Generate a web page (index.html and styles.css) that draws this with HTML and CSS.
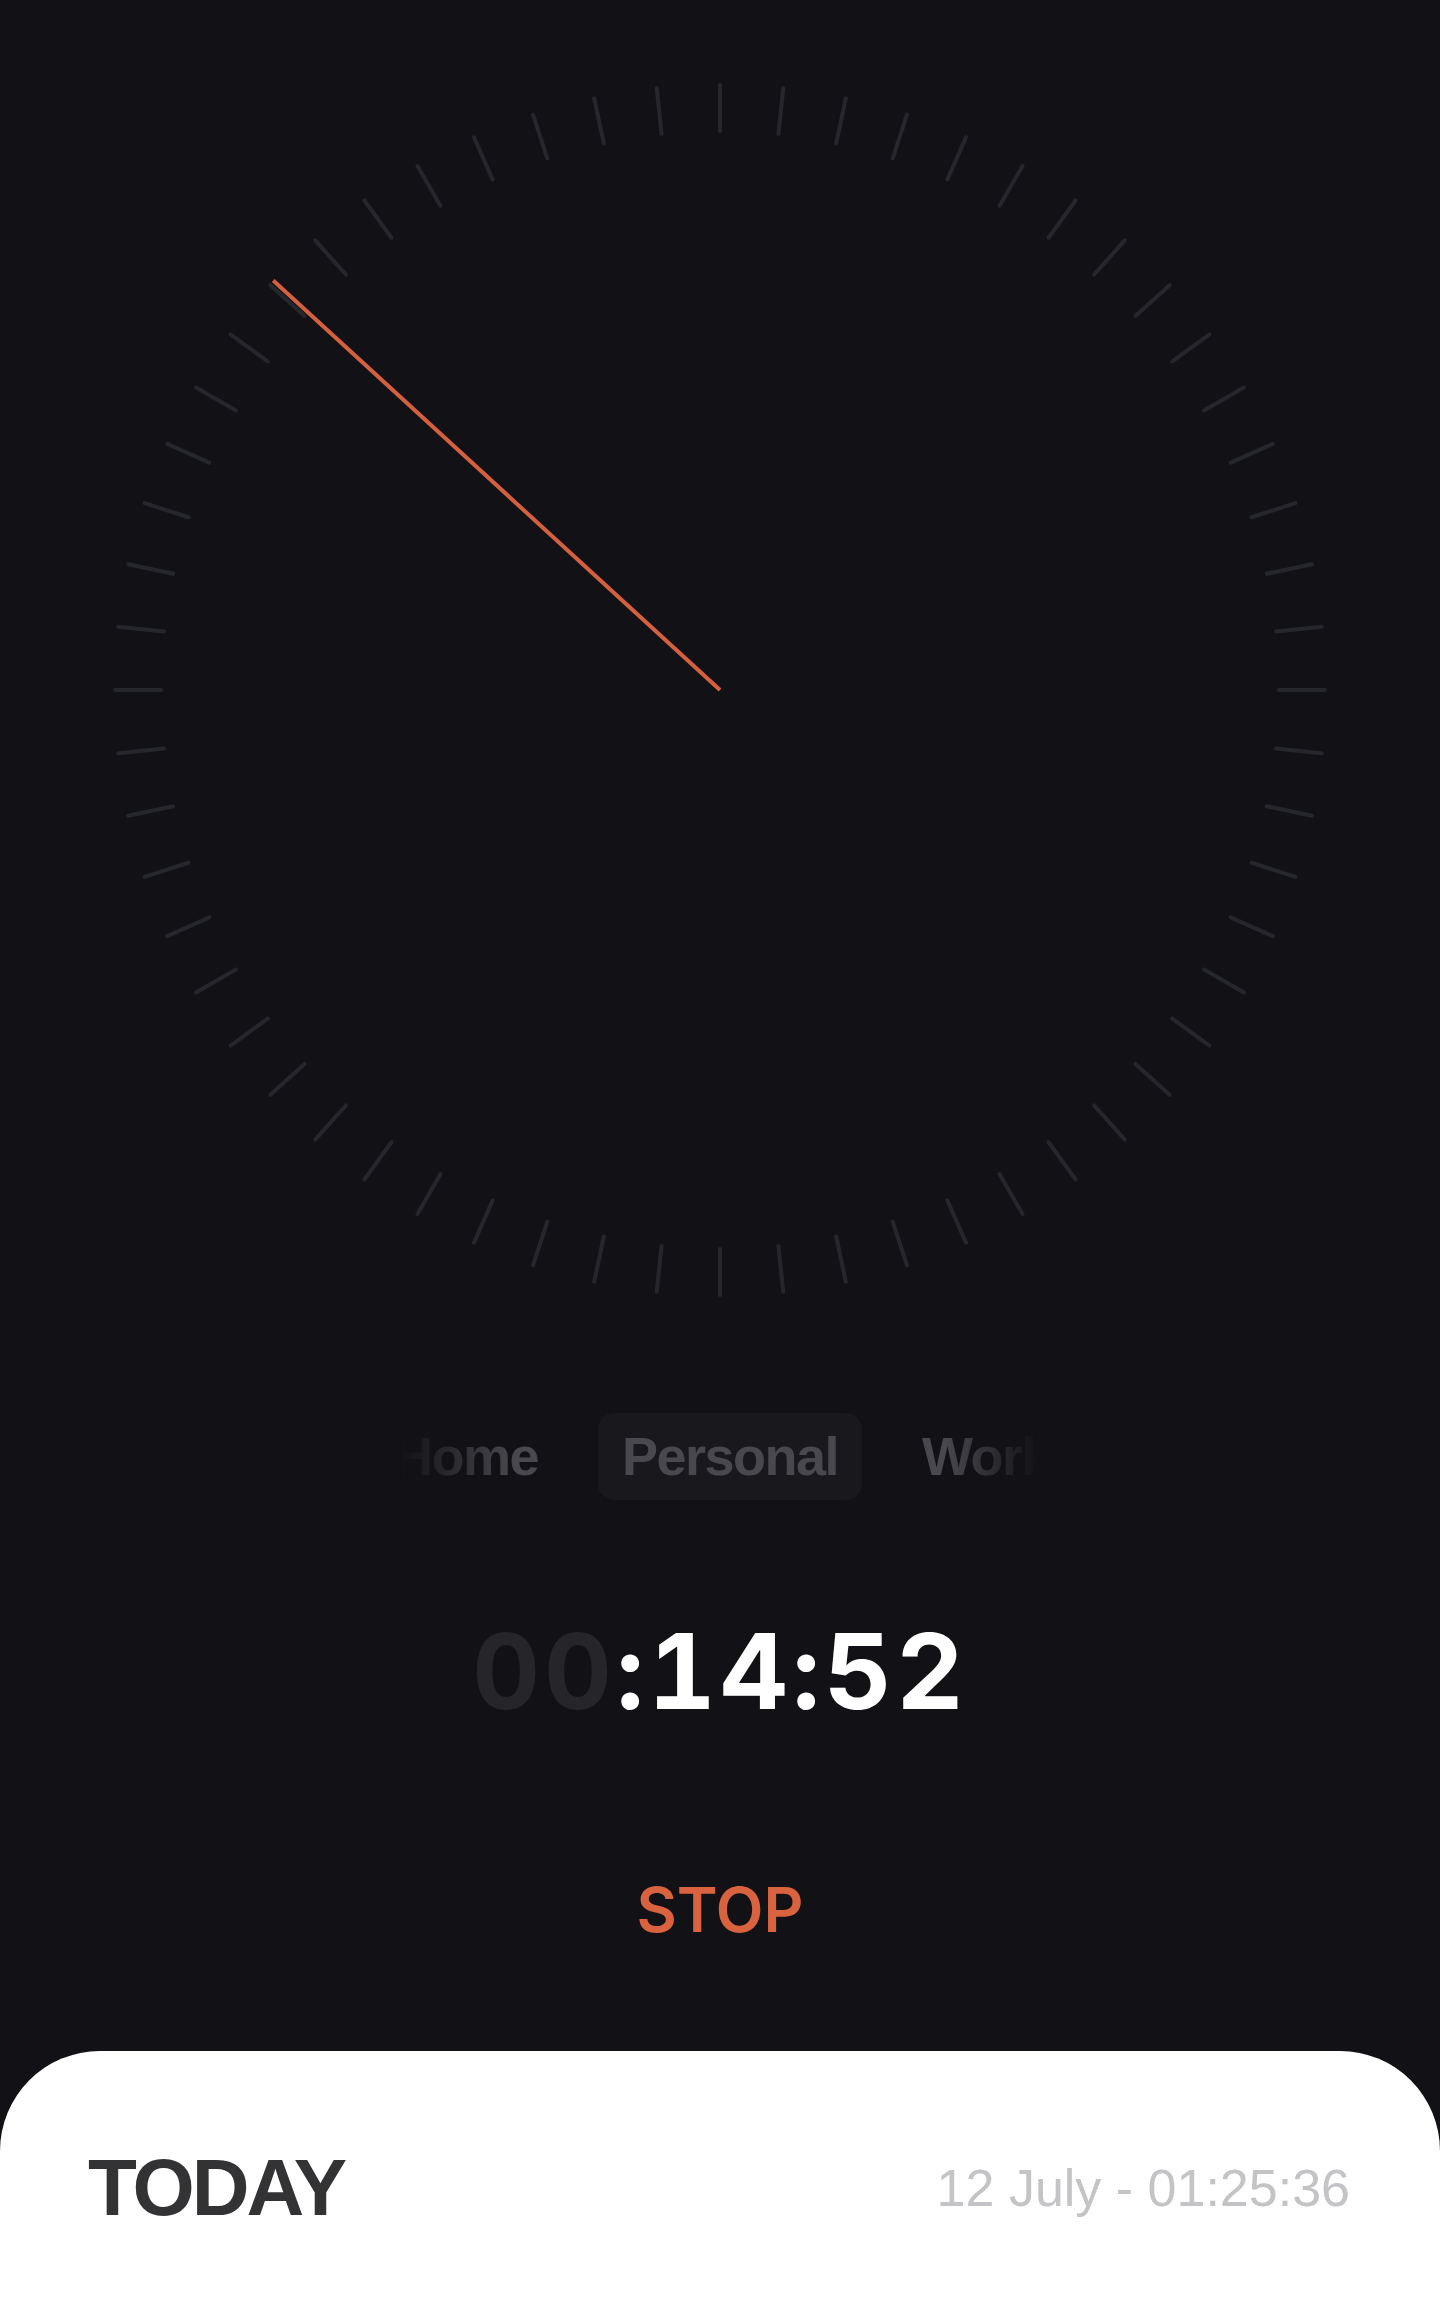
FILE: index.html
```html
<!DOCTYPE html>
<html lang="en">
<head>
<meta charset="utf-8">
<title>Timer</title>
<link rel="stylesheet" href="styles.css">
</head>
<body>
<main class="screen">
  <section class="clock">
    <svg class="dial" width="1220" height="1220" viewBox="-610 -610 1220 1220" aria-hidden="true">
      <g class="ticks">
        <line x1="0" y1="-559" x2="0" y2="-605" transform="rotate(0)"/>
        <line x1="0" y1="-559" x2="0" y2="-605" transform="rotate(6)"/>
        <line x1="0" y1="-559" x2="0" y2="-605" transform="rotate(12)"/>
        <line x1="0" y1="-559" x2="0" y2="-605" transform="rotate(18)"/>
        <line x1="0" y1="-559" x2="0" y2="-605" transform="rotate(24)"/>
        <line x1="0" y1="-559" x2="0" y2="-605" transform="rotate(30)"/>
        <line x1="0" y1="-559" x2="0" y2="-605" transform="rotate(36)"/>
        <line x1="0" y1="-559" x2="0" y2="-605" transform="rotate(42)"/>
        <line x1="0" y1="-559" x2="0" y2="-605" transform="rotate(48)"/>
        <line x1="0" y1="-559" x2="0" y2="-605" transform="rotate(54)"/>
        <line x1="0" y1="-559" x2="0" y2="-605" transform="rotate(60)"/>
        <line x1="0" y1="-559" x2="0" y2="-605" transform="rotate(66)"/>
        <line x1="0" y1="-559" x2="0" y2="-605" transform="rotate(72)"/>
        <line x1="0" y1="-559" x2="0" y2="-605" transform="rotate(78)"/>
        <line x1="0" y1="-559" x2="0" y2="-605" transform="rotate(84)"/>
        <line x1="0" y1="-559" x2="0" y2="-605" transform="rotate(90)"/>
        <line x1="0" y1="-559" x2="0" y2="-605" transform="rotate(96)"/>
        <line x1="0" y1="-559" x2="0" y2="-605" transform="rotate(102)"/>
        <line x1="0" y1="-559" x2="0" y2="-605" transform="rotate(108)"/>
        <line x1="0" y1="-559" x2="0" y2="-605" transform="rotate(114)"/>
        <line x1="0" y1="-559" x2="0" y2="-605" transform="rotate(120)"/>
        <line x1="0" y1="-559" x2="0" y2="-605" transform="rotate(126)"/>
        <line x1="0" y1="-559" x2="0" y2="-605" transform="rotate(132)"/>
        <line x1="0" y1="-559" x2="0" y2="-605" transform="rotate(138)"/>
        <line x1="0" y1="-559" x2="0" y2="-605" transform="rotate(144)"/>
        <line x1="0" y1="-559" x2="0" y2="-605" transform="rotate(150)"/>
        <line x1="0" y1="-559" x2="0" y2="-605" transform="rotate(156)"/>
        <line x1="0" y1="-559" x2="0" y2="-605" transform="rotate(162)"/>
        <line x1="0" y1="-559" x2="0" y2="-605" transform="rotate(168)"/>
        <line x1="0" y1="-559" x2="0" y2="-605" transform="rotate(174)"/>
        <line x1="0" y1="-559" x2="0" y2="-605" transform="rotate(180)"/>
        <line x1="0" y1="-559" x2="0" y2="-605" transform="rotate(186)"/>
        <line x1="0" y1="-559" x2="0" y2="-605" transform="rotate(192)"/>
        <line x1="0" y1="-559" x2="0" y2="-605" transform="rotate(198)"/>
        <line x1="0" y1="-559" x2="0" y2="-605" transform="rotate(204)"/>
        <line x1="0" y1="-559" x2="0" y2="-605" transform="rotate(210)"/>
        <line x1="0" y1="-559" x2="0" y2="-605" transform="rotate(216)"/>
        <line x1="0" y1="-559" x2="0" y2="-605" transform="rotate(222)"/>
        <line x1="0" y1="-559" x2="0" y2="-605" transform="rotate(228)"/>
        <line x1="0" y1="-559" x2="0" y2="-605" transform="rotate(234)"/>
        <line x1="0" y1="-559" x2="0" y2="-605" transform="rotate(240)"/>
        <line x1="0" y1="-559" x2="0" y2="-605" transform="rotate(246)"/>
        <line x1="0" y1="-559" x2="0" y2="-605" transform="rotate(252)"/>
        <line x1="0" y1="-559" x2="0" y2="-605" transform="rotate(258)"/>
        <line x1="0" y1="-559" x2="0" y2="-605" transform="rotate(264)"/>
        <line x1="0" y1="-559" x2="0" y2="-605" transform="rotate(270)"/>
        <line x1="0" y1="-559" x2="0" y2="-605" transform="rotate(276)"/>
        <line x1="0" y1="-559" x2="0" y2="-605" transform="rotate(282)"/>
        <line x1="0" y1="-559" x2="0" y2="-605" transform="rotate(288)"/>
        <line x1="0" y1="-559" x2="0" y2="-605" transform="rotate(294)"/>
        <line x1="0" y1="-559" x2="0" y2="-605" transform="rotate(300)"/>
        <line x1="0" y1="-559" x2="0" y2="-605" transform="rotate(306)"/>
        <line x1="0" y1="-559" x2="0" y2="-605" transform="rotate(312)"/>
        <line x1="0" y1="-559" x2="0" y2="-605" transform="rotate(318)"/>
        <line x1="0" y1="-559" x2="0" y2="-605" transform="rotate(324)"/>
        <line x1="0" y1="-559" x2="0" y2="-605" transform="rotate(330)"/>
        <line x1="0" y1="-559" x2="0" y2="-605" transform="rotate(336)"/>
        <line x1="0" y1="-559" x2="0" y2="-605" transform="rotate(342)"/>
        <line x1="0" y1="-559" x2="0" y2="-605" transform="rotate(348)"/>
        <line x1="0" y1="-559" x2="0" y2="-605" transform="rotate(354)"/>
      </g>
      <line class="hand" x1="0" y1="0" x2="0" y2="-606" transform="rotate(312.5)"/>
    </svg>
  </section>

  <nav class="categories">
    <div class="category-track">
      <span class="category">Home</span>
      <span class="category is-active">Personal</span>
      <span class="category">Work</span>
    </div>
  </nav>

  <div class="timer"><span class="timer-dim">00</span>:14:52</div>

  <button class="stop" type="button">STOP</button>

  <section class="sheet">
    <header class="sheet-head">
      <h2 class="sheet-title">TODAY</h2>
      <span class="sheet-meta">12 July - 01:25:36</span>
    </header>
  </section>
</main>
</body>
</html>
```

FILE: styles.css
```css
* {
  box-sizing: border-box;
}

html,
body {
  margin: 0;
  padding: 0;
}

body {
  background: #121216;
  font-family: "Liberation Sans", Arial, sans-serif;
  overflow: hidden;
}

.screen {
  width: 1440px;
  height: 2311px;
  display: flex;
  flex-direction: column;
  align-items: center;
}

.clock {
  padding-top: 80px;
}

.dial {
  display: block;
}

.ticks line {
  stroke: #26272c;
  stroke-width: 4;
  stroke-linecap: round;
}

.hand {
  stroke: #d4603f;
  stroke-width: 4;
  stroke-linecap: butt;
}

.categories {
  margin-top: 113px;
  width: 640px;
  height: 87px;
  overflow: hidden;
  -webkit-mask-image: linear-gradient(90deg, transparent 0, #000 115px, #000 545px, transparent 640px);
  mask-image: linear-gradient(90deg, transparent 0, #000 115px, #000 545px, transparent 640px);
}

.category-track {
  display: grid;
  grid-template-columns: minmax(0, 1fr) auto minmax(0, 1fr);
  column-gap: 36px;
  padding-left: 20px;
  height: 87px;
  align-items: center;
}

.category {
  font-family: "Liberation Sans", Arial, sans-serif;
  font-weight: 700;
  font-size: 54px;
  letter-spacing: -1.5px;
  line-height: 87px;
  height: 87px;
  padding: 0 24px;
  color: #48484e;
  white-space: nowrap;
  border-radius: 16px;
}

.category:first-child {
  justify-self: end;
}

.category:last-child {
  justify-self: start;
}

.category.is-active {
  background: #18181d;
}

.timer {
  margin-top: 118px;
  font-family: Inter, "Liberation Sans", sans-serif;
  font-weight: 700;
  font-size: 105px;
  line-height: 1;
  height: 105px;
  letter-spacing: 4px;
  font-variant-numeric: tabular-nums;
  color: #ffffff;
  white-space: nowrap;
}

.timer-dim {
  color: #25252a;
}

.stop {
  margin-top: 156px;
  padding: 0;
  border: 0;
  background: none;
  font-family: Inter, "Liberation Sans", sans-serif;
  font-weight: 600;
  font-size: 62px;
  line-height: 1;
  height: 62px;
  color: #d9633f;
  cursor: pointer;
}

.sheet {
  margin-top: 110px;
  width: 1440px;
  flex: 1;
  background: #ffffff;
  border-radius: 100px 100px 0 0;
}

.sheet-head {
  display: flex;
  justify-content: space-between;
  align-items: center;
  padding: 97px 90px 0 88px;
}

.sheet-title {
  margin: 0;
  font-family: "Liberation Sans", Arial, sans-serif;
  font-weight: 700;
  font-size: 80px;
  line-height: 1;
  letter-spacing: -3px;
  color: #333336;
}

.sheet-meta {
  font-family: "Liberation Sans", Arial, sans-serif;
  font-weight: 400;
  font-size: 52px;
  line-height: 1;
  letter-spacing: 0;
  color: #c4c4c6;
  white-space: nowrap;
}
```
